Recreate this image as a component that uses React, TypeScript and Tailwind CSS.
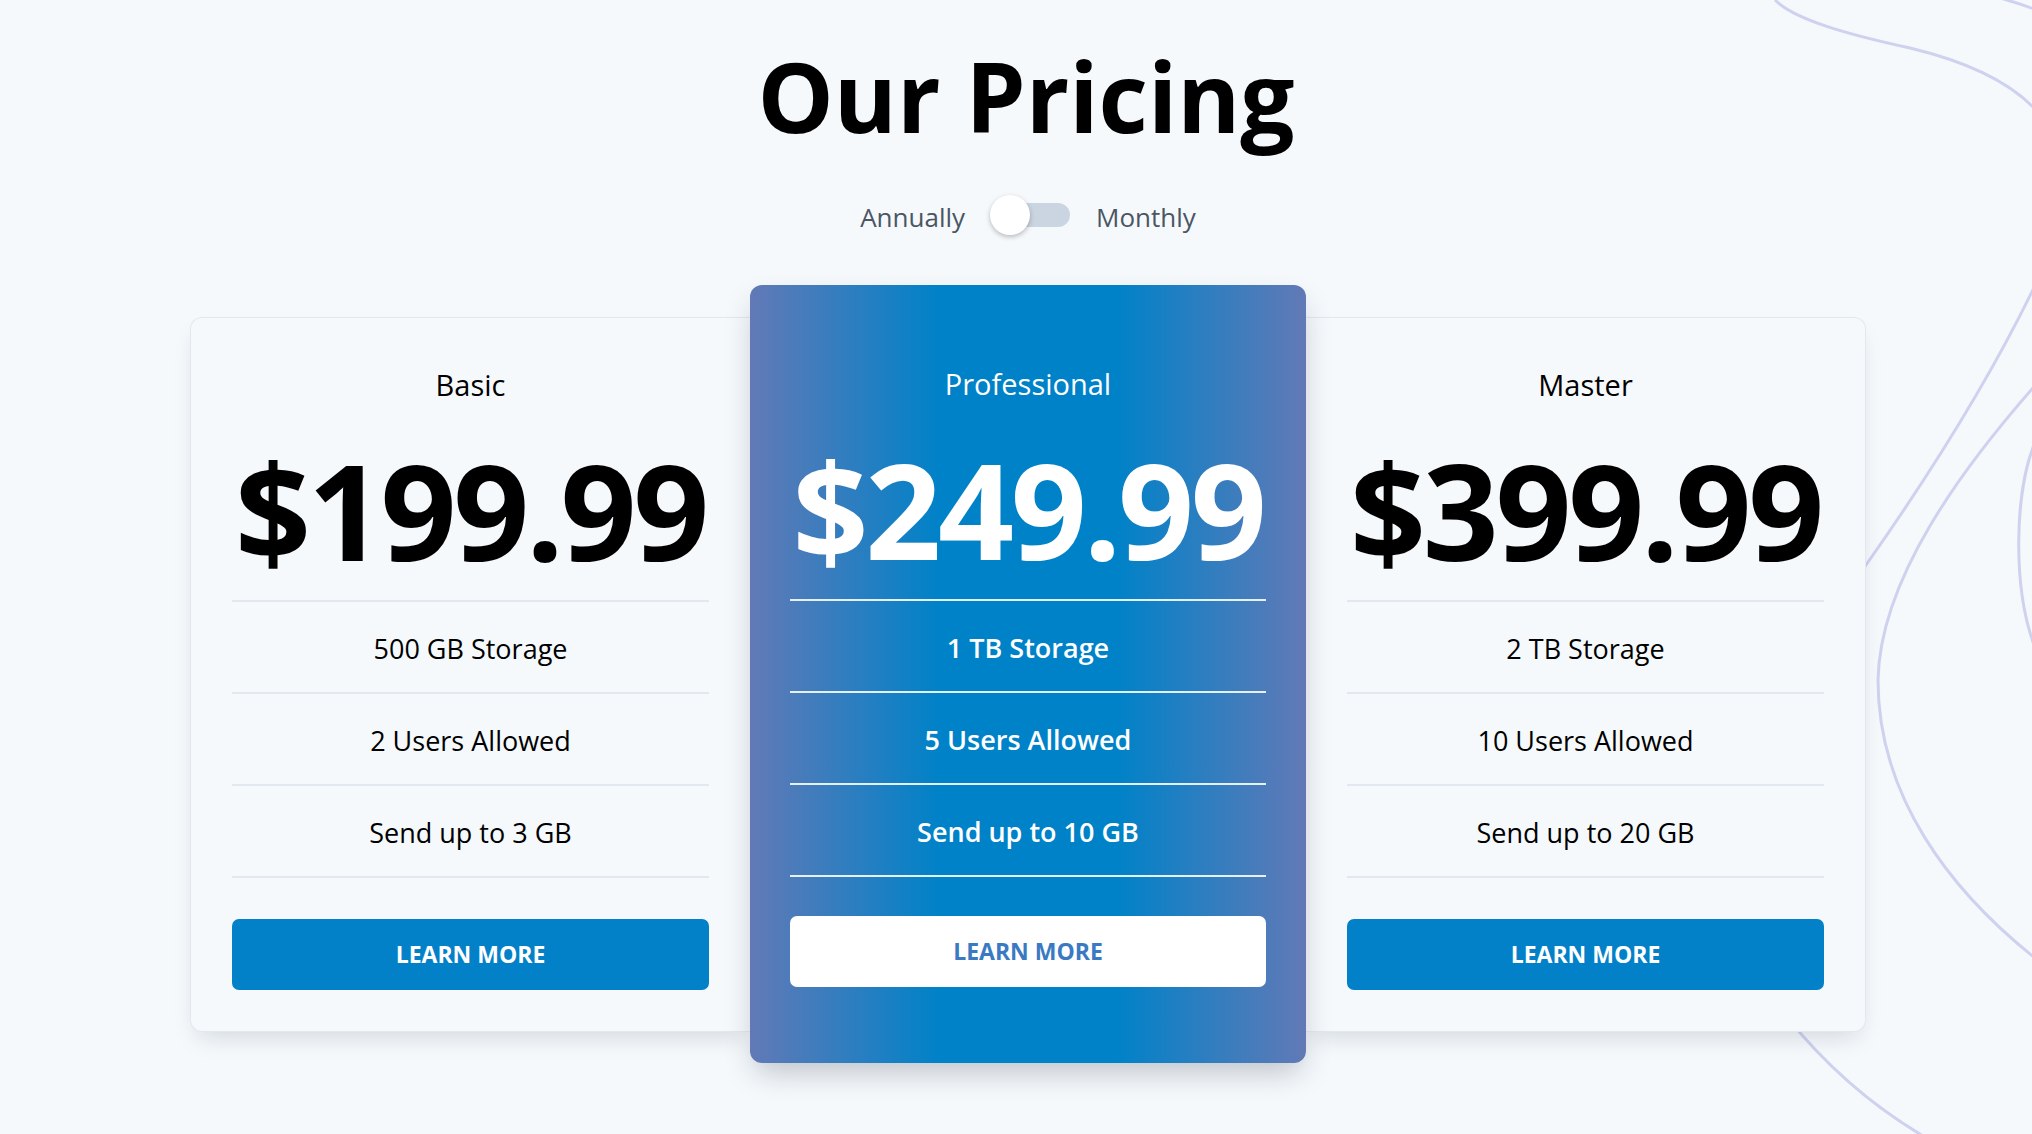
import { useState } from "react";

const plans = [
  { name: "Basic", price: "$199.99", features: ["500 GB Storage", "2 Users Allowed", "Send up to 3 GB"] },
  { name: "Professional", price: "$249.99", features: ["1 TB Storage", "5 Users Allowed", "Send up to 10 GB"], featured: true },
  { name: "Master", price: "$399.99", features: ["2 TB Storage", "10 Users Allowed", "Send up to 20 GB"] },
];

function Contours() {
  return (
    <svg
      className="pointer-events-none absolute inset-0 h-full w-full"
      viewBox="0 0 2032 1134"
      preserveAspectRatio="none"
      fill="none"
      stroke="#cfd2ef"
      strokeWidth={3}
    >
      <path d="M1775 0 C1795 20 1850 35 1910 48 C1960 60 2005 78 2034 108" />
      <path d="M2000 -2 Q2018 3 2034 9" />
      <path d="M2040 275 C2000 360 1940 460 1866 565 L1780 690" />
      <path d="M2040 380 C1960 470 1880 580 1878 680 C1878 795 1948 890 2040 962" />
      <path d="M2036 440 C2014 490 2012 590 2036 650" />
      <path d="M1770 995 C1810 1050 1860 1100 1930 1140" />
    </svg>
  );
}

function Toggle({ on, onClick }: { on: boolean; onClick: () => void }) {
  return (
    <button type="button" onClick={onClick} className="relative h-10 w-[80px]">
      <span className="absolute right-0 top-[8px] h-6 w-[66px] rounded-full bg-[#cbd5e1]" />
      <span
        className={`absolute top-0 h-10 w-10 rounded-full bg-white shadow-[0_2px_5px_rgba(0,0,0,0.25)] transition-all ${
          on ? "left-[40px]" : "left-0"
        }`}
      />
    </button>
  );
}

function PlanCard({ plan, side }: { plan: (typeof plans)[number]; side?: "left" | "right" }) {
  if (plan.featured) {
    return (
      <div className="relative z-10 flex w-[556px] flex-col rounded-[12px] bg-[linear-gradient(90deg,#6279b6_0%,#0082c8_34%,#0082c8_66%,#6279b6_100%)] px-10 pb-[76px] pt-[84px] text-white shadow-[0_14px_30px_-6px_rgba(15,23,42,0.25)]">
        <h3 className="text-center text-[29px] font-medium leading-none">{plan.name}</h3>
        <p className="mt-[44px] text-center text-[133px] font-bold leading-none tracking-[-0.025em]">{plan.price}</p>
        <ul className="mt-[24px] border-t-2 border-[#e4f1fb]">
          {plan.features.map((f) => (
            <li key={f} className="flex h-[92px] items-center justify-center border-b-2 border-[#e4f1fb] pt-[5px] text-[27px] font-semibold">
              {f}
            </li>
          ))}
        </ul>
        <button className="mt-[39px] h-[71px] rounded-[7px] bg-white text-[23px] font-bold text-[#3a7ac2]">LEARN MORE</button>
      </div>
    );
  }

  return (
    <div
      className={`flex w-[560px] flex-col border border-[#e2e8f0] bg-[#f5f9fc] px-[41px] pb-[41px] pt-[52px] text-black shadow-[0_12px_24px_-8px_rgba(15,23,42,0.15)] ${
        side === "left" ? "rounded-l-[12px] border-r-0" : "rounded-r-[12px] border-l-0"
      }`}
    >
      <h3 className="text-center text-[29px] font-medium leading-none">{plan.name}</h3>
      <p className="mt-[44px] text-center text-[133px] font-bold leading-none tracking-[-0.025em]">{plan.price}</p>
      <ul className="mt-[24px] border-t-2 border-[#e2e8f0]">
        {plan.features.map((f) => (
          <li key={f} className="flex h-[92px] items-center justify-center border-b-2 border-[#e2e8f0] pt-[5px] text-[27px] font-medium">
            {f}
          </li>
        ))}
      </ul>
      <button className="mt-[41px] h-[71px] rounded-[7px] bg-[#0381c8] text-[23px] font-bold text-white">LEARN MORE</button>
    </div>
  );
}

export default function App() {
  const [monthly, setMonthly] = useState(false);

  return (
    <div className="relative min-h-screen overflow-hidden bg-[#f5f9fc] font-['Open_Sans',sans-serif]">
      <Contours />

      <div className="relative flex flex-col items-center pl-6 pt-12">
        <h1 className="-ml-1 text-[96px] font-bold leading-none text-black">Our Pricing</h1>

        {/* Billing switch */}
        <div className="mt-[51px] flex items-center text-[26px] font-medium leading-none text-[#4b5563]">
          <span>Annually</span>
          <span className="ml-[25px] mr-[26px]">
            <Toggle on={monthly} onClick={() => setMonthly(!monthly)} />
          </span>
          <span>Monthly</span>
        </div>

        {/* Plans */}
        <div className="mt-[47px] flex items-center">
          <PlanCard plan={plans[0]} side="left" />
          <PlanCard plan={plans[1]} />
          <PlanCard plan={plans[2]} side="right" />
        </div>
      </div>
    </div>
  );
}
